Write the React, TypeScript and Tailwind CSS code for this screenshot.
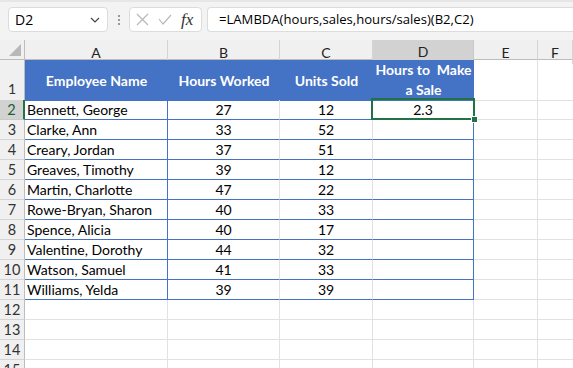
import React from 'react'

const rows: [string, number, number][] = [
  ['Bennett, George', 27, 12],
  ['Clarke, Ann', 33, 52],
  ['Creary, Jordan', 37, 51],
  ['Greaves, Timothy', 39, 12],
  ['Martin, Charlotte', 47, 22],
  ['Rowe-Bryan, Sharon', 40, 33],
  ['Spence, Alicia', 40, 17],
  ['Valentine, Dorothy', 44, 32],
  ['Watson, Samuel', 41, 33],
  ['Williams, Yelda', 39, 39],
]

const cols = ['A', 'B', 'C', 'D', 'E', 'F']

function Toolbar() {
  return (
    <div className="h-[40px] bg-[#f3f3f3] border-t-2 border-[#e6e6e6] flex items-start pt-[5px] font-['Open_Sans',sans-serif]">
      <div className="ml-[8px] w-[100px] h-[25px] bg-white border border-[#dcdcdc] rounded-[4px] flex items-center pl-[6px] pr-[7px] text-[14px] text-black">
        <span className="flex-1">D2</span>
        <svg width="10" height="6" viewBox="0 0 10 6">
          <path d="M1 1 L5 5 L9 1" fill="none" stroke="#444" strokeWidth="1.2" />
        </svg>
      </div>
      <div className="w-[21px] h-[25px] flex flex-col items-center justify-center gap-[2px]">
        <div className="w-[2px] h-[2px] bg-[#999]" />
        <div className="w-[2px] h-[2px] bg-[#999]" />
        <div className="w-[2px] h-[2px] bg-[#999]" />
      </div>
      <div className="w-[73px] h-[25px] bg-white border border-[#dcdcdc] rounded-[4px] flex items-center pl-[6px] gap-[9px]">
        <svg width="13" height="13" viewBox="0 0 13 13">
          <path d="M1 1 L12 12 M12 1 L1 12" stroke="#b8b8b8" strokeWidth="1.2" />
        </svg>
        <svg width="14" height="11" viewBox="0 0 14 11">
          <path d="M1 5 L5 10 L13 1" fill="none" stroke="#b8b8b8" strokeWidth="1.2" />
        </svg>
        <span className="italic text-[17px] leading-none text-[#333] font-['Liberation_Serif',serif]">fx</span>
      </div>
      <div className="ml-[5px] flex-1 h-[25px] bg-white border border-[#dcdcdc] rounded-l-[4px] border-r-0 flex items-center pl-[11px] text-[13.1px] text-black whitespace-nowrap">
        =LAMBDA(hours,sales,hours/sales)(B2,C2)
      </div>
    </div>
  )
}

export default function App() {
  const grid = 'grid grid-cols-[25px_143px_112px_93px_101px_64px_1fr]'
  return (
    <div className="w-[573px] h-[368px] overflow-hidden bg-white relative font-['Lato',sans-serif]">
      <Toolbar />
      {/* column headers */}
      <div className={`${grid} h-[20px] bg-[#f0f0f0] border-b border-[#bdbdbd] text-[14px] text-[#222]`}>
        <div className="border-r border-[#bdbdbd] relative">
          <svg className="absolute left-[9px] top-[4px]" width="12" height="12" viewBox="0 0 12 12">
            <polygon points="12,0 12,12 0,12" fill="#b8b8b8" />
          </svg>
        </div>
        {cols.map((c) => (
          <div
            key={c}
            className={
              c === 'D'
                ? 'bg-[#d2d2d2] border-b-2 border-b-[#217346] border-r border-r-[#c8c8c8] flex items-center justify-center pt-[1px]'
                : 'border-r border-[#d4d4d4] flex items-center justify-center'
            }
          >
            {c}
          </div>
        ))}
      </div>
      {/* row 1 */}
      <div className={`${grid} h-[40px] text-[14px]`}>
        <div className="bg-[#f0f0f0] border-r border-r-[#bdbdbd] border-b border-b-[#d4d4d4] flex items-end justify-center text-[#333] pb-[1px]">1</div>
        <div className="bg-[#4472c4] text-white font-bold flex items-center justify-center border-b border-[#4472c4]">Employee Name</div>
        <div className="bg-[#4472c4] text-white font-bold flex items-center justify-center border-b border-[#4472c4]">Hours Worked</div>
        <div className="bg-[#4472c4] text-white font-bold flex items-center justify-center border-b border-[#4472c4]">Units Sold</div>
        <div className="bg-[#4472c4] text-white font-bold flex flex-col items-center justify-center border-b border-[#4472c4] leading-[20px] whitespace-pre">
          <span>Hours to  Make</span>
          <span>a Sale</span>
        </div>
        <div className="border-r border-b border-[#e1e1e1]" />
        <div className="border-b border-[#e1e1e1]" />
      </div>
      {/* data rows + empty rows */}
      {Array.from({ length: 14 }).map((_, i) => {
        const n = i + 2
        const d = rows[i]
        const sel = n === 2
        const blue = !!d
        return (
          <div key={n} className={`${grid} h-[20px] text-[14px] text-black`}>
            <div
              className={
                sel
                  ? 'bg-[#d2d2d2] border-r-2 border-r-[#217346] border-b border-b-[#c8c8c8] flex items-end justify-center text-[#1d5f36] leading-[19px] text-[14.5px]'
                  : 'bg-[#f0f0f0] border-r border-r-[#bdbdbd] border-b border-b-[#d4d4d4] flex items-end justify-center text-[#333] leading-[19px] text-[14.5px]'
              }
            >
              {n}
            </div>
            <div className={`${blue ? 'border-r-[#4472c4] border-b-[#4472c4]' : 'border-r-[#e1e1e1] border-b-[#e1e1e1]'} border-r border-b pl-[2px] flex items-end leading-[19px] whitespace-nowrap`}>
              {d ? d[0] : ''}
            </div>
            <div className={`${blue ? 'border-b-[#4472c4]' : 'border-b-[#e1e1e1]'} border-r border-r-[#e1e1e1] border-b flex items-end justify-center leading-[19px]`}>
              {d ? d[1] : ''}
            </div>
            <div className={`${blue ? 'border-b-[#4472c4]' : 'border-b-[#e1e1e1]'} border-r border-r-[#e1e1e1] border-b flex items-end justify-center leading-[19px]`}>
              {d ? d[2] : ''}
            </div>
            <div className={`${blue ? 'border-r-[#4472c4] border-b-[#4472c4]' : 'border-r-[#e1e1e1] border-b-[#e1e1e1]'} border-r border-b flex items-end justify-center leading-[19px]`}>
              {sel ? '2.3' : ''}
            </div>
            <div className="border-r border-b border-[#e1e1e1]" />
            <div className="border-b border-[#e1e1e1]" />
          </div>
        )
      })}
      {/* active cell outline */}
      <div className="absolute left-[371px] top-[98px] w-[104px] h-[22px] border-2 border-[#217346]">
        <div className="absolute right-[-5px] bottom-[-5px] w-[7px] h-[7px] bg-[#217346] border border-white" />
      </div>
    </div>
  )
}
